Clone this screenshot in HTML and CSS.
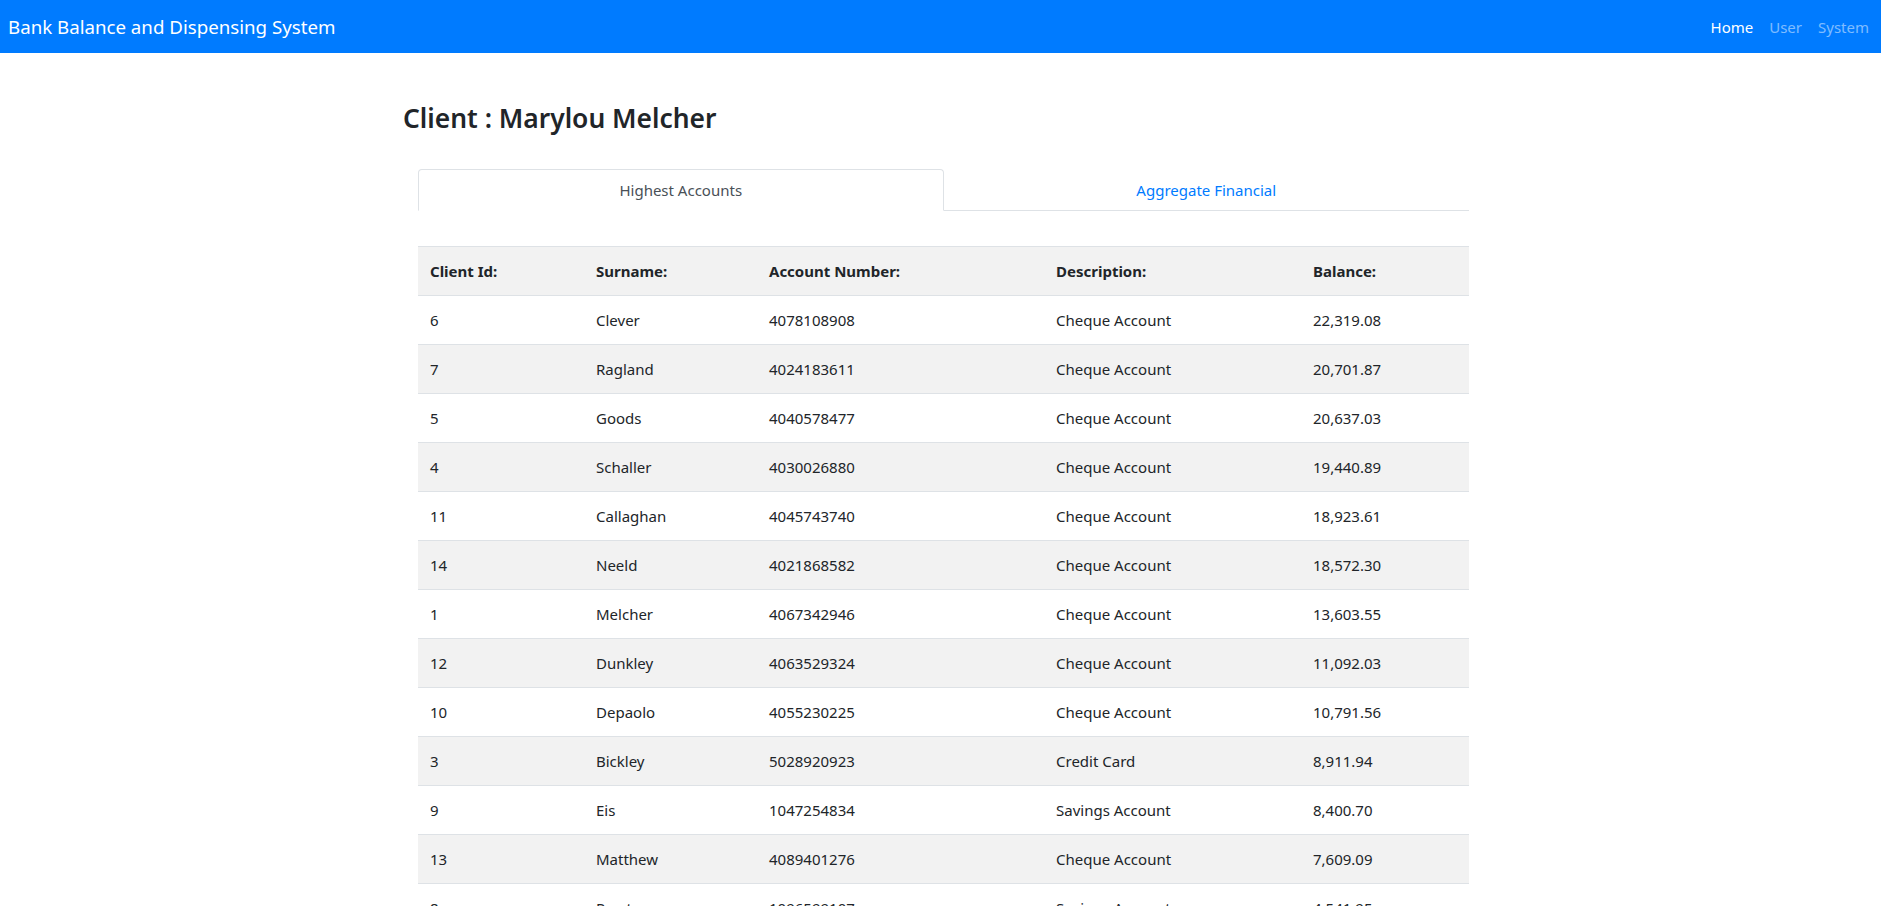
FILE: index.html
```html
<!DOCTYPE html>
<html lang="en">
<head>
<meta charset="utf-8">
<title>Bank Balance and Dispensing System</title>
<link rel="stylesheet" href="styles.css">
</head>
<body>
<nav class="navbar">
  <a class="brand" href="#">Bank Balance and Dispensing System</a>
  <ul class="nav-links">
    <li><a class="nav-link active" href="#">Home</a></li>
    <li><a class="nav-link" href="#">User</a></li>
    <li><a class="nav-link" href="#">System</a></li>
  </ul>
</nav>
<main class="wrapper">
  <h3 class="client-title">Client : Marylou Melcher</h3>
  <div class="content">
    <ul class="tabs">
      <li class="tab"><a class="tab-link active" href="#">Highest Accounts</a></li>
      <li class="tab"><a class="tab-link" href="#">Aggregate Financial</a></li>
    </ul>
    <table class="accounts">
      <colgroup>
        <col class="c1"><col class="c2"><col class="c3"><col class="c4"><col class="c5">
      </colgroup>
      <thead>
        <tr><th>Client Id:</th><th>Surname:</th><th>Account Number:</th><th>Description:</th><th>Balance:</th></tr>
      </thead>
      <tbody>
        <tr><td>6</td><td>Clever</td><td>4078108908</td><td>Cheque Account</td><td>22,319.08</td></tr>
        <tr><td>7</td><td>Ragland</td><td>4024183611</td><td>Cheque Account</td><td>20,701.87</td></tr>
        <tr><td>5</td><td>Goods</td><td>4040578477</td><td>Cheque Account</td><td>20,637.03</td></tr>
        <tr><td>4</td><td>Schaller</td><td>4030026880</td><td>Cheque Account</td><td>19,440.89</td></tr>
        <tr><td>11</td><td>Callaghan</td><td>4045743740</td><td>Cheque Account</td><td>18,923.61</td></tr>
        <tr><td>14</td><td>Neeld</td><td>4021868582</td><td>Cheque Account</td><td>18,572.30</td></tr>
        <tr><td>1</td><td>Melcher</td><td>4067342946</td><td>Cheque Account</td><td>13,603.55</td></tr>
        <tr><td>12</td><td>Dunkley</td><td>4063529324</td><td>Cheque Account</td><td>11,092.03</td></tr>
        <tr><td>10</td><td>Depaolo</td><td>4055230225</td><td>Cheque Account</td><td>10,791.56</td></tr>
        <tr><td>3</td><td>Bickley</td><td>5028920923</td><td>Credit Card</td><td>8,911.94</td></tr>
        <tr><td>9</td><td>Eis</td><td>1047254834</td><td>Savings Account</td><td>8,400.70</td></tr>
        <tr><td>13</td><td>Matthew</td><td>4089401276</td><td>Cheque Account</td><td>7,609.09</td></tr>
        <tr><td>8</td><td>Preston</td><td>1096599107</td><td>Savings Account</td><td>4,541.95</td></tr>
      </tbody>
    </table>
  </div>
</main>
</body>
</html>
```
FILE: styles.css
```css
* { box-sizing: border-box; }

body {
  margin: 0;
  font-family: "Noto Sans", "Open Sans", "DejaVu Sans", sans-serif;
  font-size: 16px;
  line-height: 1.5;
  color: #212529;
  background: #fff;
}

a { text-decoration: none; }

.navbar {
  height: 53px;
  background: #007bff;
  display: flex;
  align-items: center;
  justify-content: space-between;
  padding: 0 4px 0 8px;
}

.brand {
  color: #fff;
  font-size: 18.7px;
  line-height: 30px;
}

.nav-links {
  list-style: none;
  margin: 0;
  padding: 0;
  display: flex;
}

.nav-link {
  display: block;
  padding: 0 8px;
  color: rgba(255, 255, 255, 0.5);
  font-size: 15px;
  line-height: 24px;
}

.nav-link.active { color: #fff; }

.wrapper {
  width: 1075px;
  margin: 0 auto;
}

.client-title {
  margin: 49px 0 35px;
  font-size: 26.4px;
  line-height: 32px;
  font-weight: 600;
}

.content {
  margin-left: 15px;
  width: 1051px;
}

.tabs {
  list-style: none;
  margin: 0;
  padding: 0;
  display: flex;
  border-bottom: 1px solid #dee2e6;
}

.tab {
  flex: 1 1 0;
  margin-bottom: -1px;
}

.tab-link {
  display: block;
  text-align: center;
  padding: 8px 16px;
  font-size: 15px;
  line-height: 24px;
  border: 1px solid transparent;
  border-top-left-radius: 4px;
  border-top-right-radius: 4px;
  color: #007bff;
}

.tab-link.active {
  color: #495057;
  background: #fff;
  border-color: #dee2e6 #dee2e6 #fff;
}

.accounts {
  margin-top: 35px;
  width: 1051px;
  border-collapse: collapse;
  table-layout: fixed;
}

.c1 { width: 166px; }
.c2 { width: 173px; }
.c3 { width: 287px; }
.c4 { width: 257px; }
.c5 { width: 168px; }

.accounts th,
.accounts td {
  padding: 12px;
  line-height: 24px;
  text-align: left;
  border-top: 1px solid #dee2e6;
  vertical-align: top;
  font-size: 15px;
}

.accounts th {
  font-weight: 700;
  background: #f2f2f2;
}

.accounts tbody tr:nth-child(even) { background: #f2f2f2; }
```
